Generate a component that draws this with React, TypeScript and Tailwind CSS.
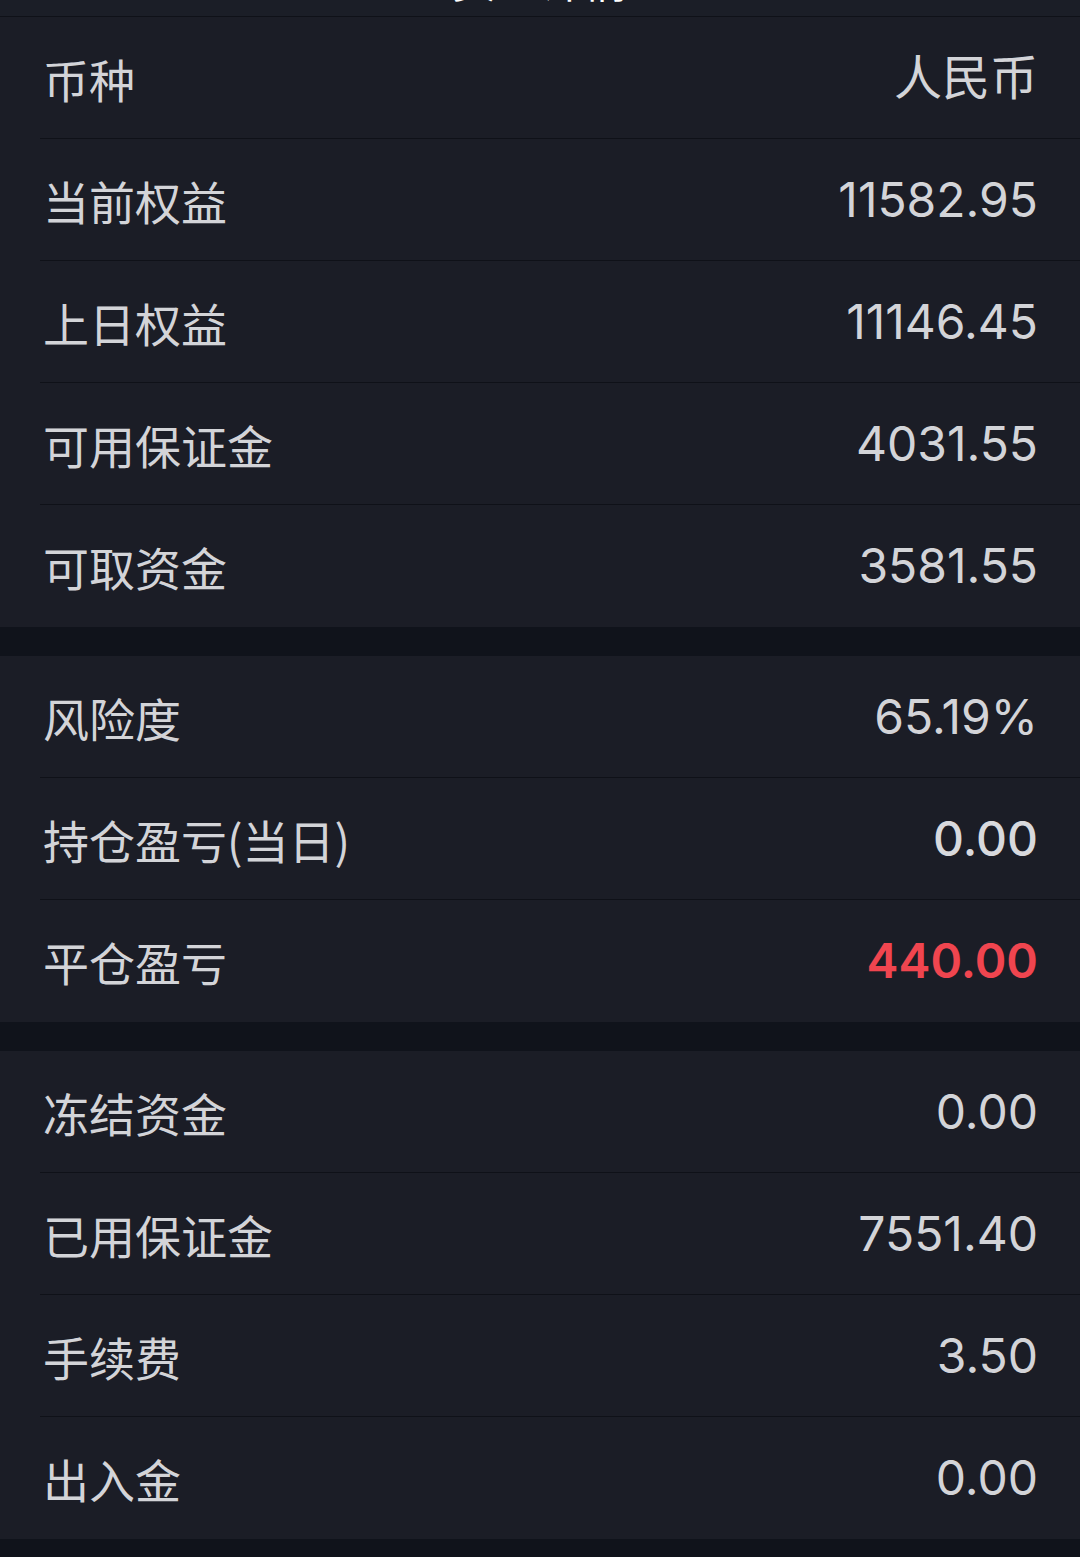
type Row = {
  label: string;
  value: string;
  tone?: "normal" | "strong" | "loss";
};

const sections: Row[][] = [
  [
    { label: "币种", value: "人民币" },
    { label: "当前权益", value: "11582.95" },
    { label: "上日权益", value: "11146.45" },
    { label: "可用保证金", value: "4031.55" },
    { label: "可取资金", value: "3581.55" },
  ],
  [
    { label: "风险度", value: "65.19%" },
    { label: "持仓盈亏(当日)", value: "0.00", tone: "strong" },
    { label: "平仓盈亏", value: "440.00", tone: "loss" },
  ],
  [
    { label: "冻结资金", value: "0.00" },
    { label: "已用保证金", value: "7551.40" },
    { label: "手续费", value: "3.50" },
    { label: "出入金", value: "0.00" },
  ],
];

const valueClass = {
  normal: "text-[#d3d4d8] font-normal",
  strong: "text-[#d8d9dd] font-medium",
  loss: "text-[#f0454f] font-semibold",
};

function InfoRow({ row, last }: { row: Row; last: boolean }) {
  const tone = row.tone ?? "normal";
  return (
    <div className="pl-[40px]">
      <div
        className={`flex items-center justify-between h-[122px] pl-[3px] pr-[42px] ${
          last ? "" : "border-b border-[#0f1118]"
        }`}
      >
        <span className="text-[46px] leading-none text-[#d3d4d8] font-['Noto_Sans_CJK_SC',sans-serif]">
          {row.label}
        </span>
        <span
          className={`text-[48px] leading-none font-['Inter','Noto_Sans_CJK_SC',sans-serif] ${valueClass[tone]}`}
        >
          {row.value}
        </span>
      </div>
    </div>
  );
}

export default function App() {
  return (
    <div className="min-h-[1557px] w-full bg-[#10131b] flex flex-col gap-[29px] pb-[20px]">
      <div className="flex flex-col">
        {/* header, scrolled mostly out of view */}
        <div className="h-[17px] overflow-hidden bg-[#1b1e27] border-b border-[#0f1118]">
          <div className="-mt-[43px] text-center text-[44px] leading-none text-white font-['Noto_Sans_CJK_SC',sans-serif]">
            资金详情
          </div>
        </div>
        <div className="bg-[#1b1d26]">
          {sections[0].map((row, i) => (
            <InfoRow key={row.label} row={row} last={i === sections[0].length - 1} />
          ))}
        </div>
      </div>
      {sections.slice(1).map((sec, si) => (
        <div key={si} className="bg-[#1b1d26]">
          {sec.map((row, i) => (
            <InfoRow key={row.label} row={row} last={i === sec.length - 1} />
          ))}
        </div>
      ))}
    </div>
  );
}
